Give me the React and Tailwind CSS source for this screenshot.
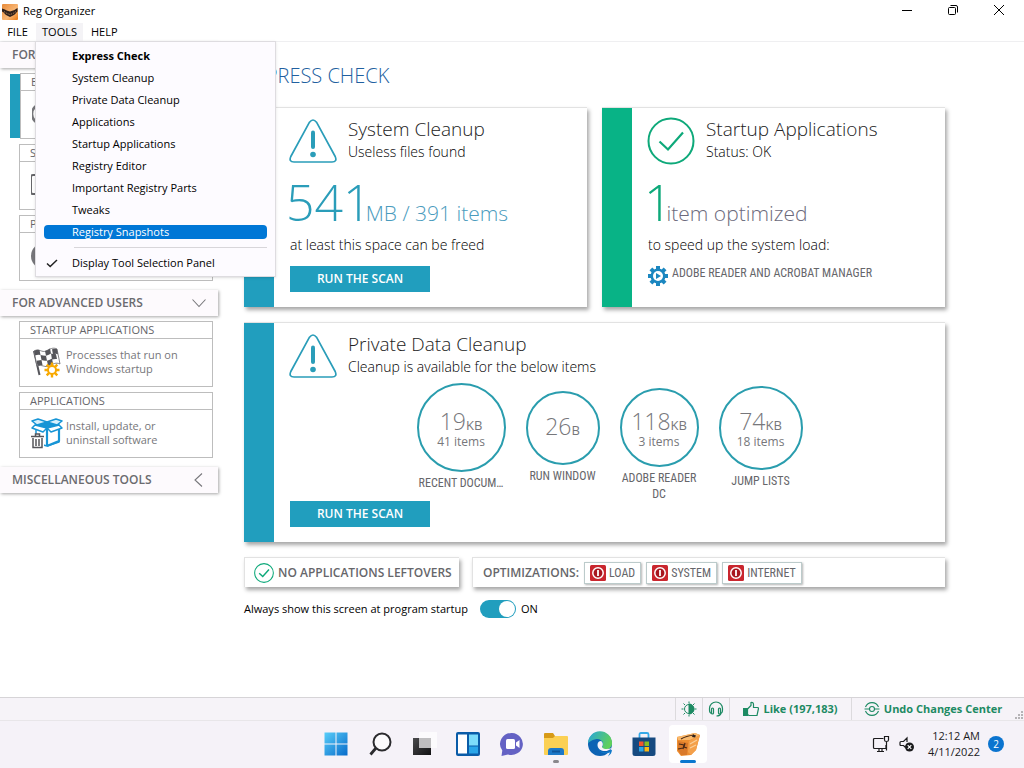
import React from "react";

const UI = "font-['Open_Sans','Noto_Sans',sans-serif]";
const NARROW = "font-['Roboto_Condensed','Liberation_Sans_Narrow','Open_Sans',sans-serif] font-normal";

const MENU_ITEMS = [
  "Express Check",
  "System Cleanup",
  "Private Data Cleanup",
  "Applications",
  "Startup Applications",
  "Registry Editor",
  "Important Registry Parts",
  "Tweaks",
  "Registry Snapshots",
];

function ToolsMenu() {
  return (
    <div className="absolute top-full left-0 z-20 flex w-[241px] flex-col border border-[#dedce0] bg-[#fdfbff] pt-[3px] pb-[2px] text-[11px] text-black shadow-sm">
      {MENU_ITEMS.map((item, i) => (
        <button
          key={item}
          className={`flex h-[22px] items-center px-2 text-left ${i === 0 ? "font-bold" : ""}`}
        >
          <span
            className={
              item === "Registry Snapshots"
                ? "flex h-[14px] w-full items-center rounded bg-[#0077d6] pl-7 text-white"
                : "pl-7"
            }
          >
            {item}
          </span>
        </button>
      ))}
      <div className="mt-1 mr-2 ml-[38px] border-t border-[#d8d6da]" />
      <button className="mt-1 flex h-[22px] items-center pl-[10px] text-left">
        <svg viewBox="0 0 12 12" className="mr-[14px] size-3" fill="none" stroke="#222" strokeWidth="1.5">
          <path d="M1 6.5 4.2 9.5 11 3" />
        </svg>
        Display Tool Selection Panel
      </button>
    </div>
  );
}

function AppLogo({ className }) {
  return (
    <svg viewBox="0 0 16 16" className={className}>
      <defs>
        <linearGradient id="logoFill" x1="0" y1="0" x2="1" y2="1">
          <stop offset="0" stopColor="#e88a38" />
          <stop offset=".6" stopColor="#f9b877" />
          <stop offset="1" stopColor="#e87a14" />
        </linearGradient>
      </defs>
      <rect width="16" height="16" rx="1" fill="url(#logoFill)" />
      <path d="M0 4.500c2 .2 4 2 5.500 2.200L8 7.500l3-1C13 6 14.500 4.500 15.500 4v3.500C14 8.500 13 11 11 11.500L8 13 5 11.500C3 11 2 8 0 7.500Z" fill="#2e211c" />
      <path d="M2 7.500l3 2 3 1 3-1 3-2" fill="none" stroke="#b98a63" strokeWidth=".8" strokeDasharray="1.500 1" />
    </svg>
  );
}

function CaptionBar() {
  return (
    <header className="bg-white">
      <div className="flex h-[23px] items-start justify-between pr-[2px] pl-[2px]">
        <div className="flex h-full items-center gap-[5px] text-black">
          <AppLogo className="size-4" />
          <h1 className="text-[11px]">Reg Organizer</h1>
        </div>
        <div className="flex text-black">
          <button aria-label="Minimize" className="flex h-5 w-[46px] items-center justify-center">
            <svg viewBox="0 0 12 12" className="size-3" stroke="currentColor"><path d="M1 6.500h10" /></svg>
          </button>
          <button aria-label="Restore" className="flex h-5 w-[45px] items-center justify-center">
            <svg viewBox="0 0 12 12" className="size-3" fill="none" stroke="currentColor">
              <rect x="1.500" y="3.500" width="7" height="7" rx="1" />
              <path d="M3.500 1.500H9a1.500 1.500 0 0 1 1.500 1.500v5.500" />
            </svg>
          </button>
          <button aria-label="Close" className="flex h-5 w-[47px] items-center justify-center">
            <svg viewBox="0 0 12 12" className="size-3" stroke="currentColor"><path d="M1 1l10 10M11 1L1 11" /></svg>
          </button>
        </div>
      </div>
      <nav className="flex h-[19px] items-stretch border-b border-[#efeff1] text-[11px] text-black">
        <button className="w-[35px] text-center">FILE</button>
        <div className="relative flex pl-px">
          <button className="w-[47px] bg-[#f4f3f6] text-center">TOOLS</button>
          <ToolsMenu />
        </div>
        <button className="px-2">HELP</button>
      </nav>
    </header>
  );
}

function SectionHeader({ children, open }) {
  return (
    <button className="flex h-[26px] w-full items-center justify-between bg-[#fdfafd] pr-[11px] pl-3 text-left text-xs font-semibold text-[#6b6b6f] shadow-[1px_1px_3px_rgba(0,0,0,0.35)]">
      {children}
      <svg viewBox="0 0 16 16" className="size-4" fill="none" stroke="#77777b" strokeWidth="1.100">
        <path d={open ? "M1.500 4.500 8 11.500l6.500-7" : "M11 1.500 4 8l7 6.500"} />
      </svg>
    </button>
  );
}

function ToolCard({ title, icon, lines, active }) {
  return (
    <div className={`mr-[5px] flex ${active ? "ml-[10px]" : "ml-[19px]"}`}>
      {active && <div className="my-px w-[10px] bg-[#219ebe]" />}
      <a href="#" className="block h-[66px] flex-1 border border-[#bdbdbd] bg-white text-[#66666a]">
        <span className="flex h-[17px] items-center border-b border-[#bdbdbd] pl-[10px] text-[11px]">{title}</span>
        <span className="flex h-[45px] items-center gap-[3px] pl-[11px]">
          {icon}
          <span className="text-[11px] leading-[14px] text-[#77777b]">
            {lines.map((l) => (
              <span key={l} className="block">{l}</span>
            ))}
          </span>
        </span>
      </a>
    </div>
  );
}

const GaugeIcon = (
  <svg viewBox="0 0 32 32" className="size-8" fill="none" stroke="#77777b">
    <circle cx="10" cy="16" r="10" strokeWidth="2.500" />
    <path d="M10 16l5-5" strokeWidth="2" />
  </svg>
);
const DiskIcon = (
  <svg viewBox="0 0 32 32" className="size-8" fill="none" stroke="#66666a" strokeWidth="2">
    <rect x="0" y="6" width="26" height="19" rx="2" />
    <path d="M6 29h16" />
  </svg>
);
const PrivacyIcon = (
  <svg viewBox="0 0 32 32" className="size-8">
    <circle cx="13" cy="16" r="13" fill="#77777b" />
    <path d="M8 13h10v8H8z" fill="#fff" />
  </svg>
);
const FlagIcon = (
  <svg viewBox="0 0 32 32" className="size-8">
    <path d="M3 5 8.500 29" stroke="#55555a" strokeWidth="2" />
    <path d="M3 5c5-3 8 2 12 0s7-4 11-2l3 15c-4-2-7 0-11 2s-7-2-12 0Z" fill="#fff" stroke="#66666a" strokeWidth=".8" />
    <g fill="#55555a">
      <path d="M3 5q3-1.700 5.500-1l1 5q-3-.6-5.500.600ZM14 5q3-.8 5-2.500l1 5q-2 1.400-5 2.200ZM25 2.700l1 .3 1 5.200q-2.500-1-5 .300l-1-5.200q2-.9 4-.6ZM9.500 9q3 .8 5.500.700l1 5q-3 .3-5.500-.6ZM20 7.500l2 .5q2-.7 3 .3l1 4.700q-2.500-.4-5 .6ZM5.500 14.700l5-.600 1 4.900q-3 0-5 1ZM16 14.700q3-.8 5-2.100l1 5q-2 1-5 2.200Z" />
    </g>
    <g transform="translate(21 24)">
      <g stroke="#f8a900" strokeWidth="2.400">
        <path d="M0-7.500v15M-7.500 0h15M-5.300-5.300 5.300 5.300M5.300-5.300-5.300 5.300" />
      </g>
      <circle r="4" fill="#fff" stroke="#f8a900" strokeWidth="2" />
    </g>
  </svg>
);
const BoxIcon = (
  <svg viewBox="0 0 32 32" className="size-8" fill="none">
    <g stroke="#1795d6" strokeWidth="1.500" strokeLinejoin="round">
      <path d="M5 9v17l11 3 12-4V9" fill="#fff" />
      <path d="M5 8l11 3 12-3-3-3-9 1-9-1Z" fill="#1795d6" />
      <path d="M4 8 1 11l11 4 4-4Z" fill="#fff" />
      <path d="M28 8l3 3-11 4-4-4Z" fill="#fff" />
      <path d="M7 2 1 4l5 4 10-3Z" fill="#d8f0fc" />
      <path d="M25 2l6 2-5 4-10-3Z" fill="#d8f0fc" />
      <path d="M16 12v17M28 12v12l-12 5" strokeWidth="2.200" />
    </g>
    <path d="M0 17h13v15H0z" fill="#fff" />
    <g stroke="#55555a" strokeWidth="1.500">
      <path d="M0 19.500h13M4.500 19v-2h4v2" />
      <path d="M2 21v9.500h9V21M5 22v7M8 22v7" />
    </g>
  </svg>
);

function Sidebar() {
  return (
    <aside className="flex w-[218px] shrink-0 flex-col">
      <SectionHeader open>FOR HOME USERS</SectionHeader>
      <div className="mt-[5px] mb-[9px] flex flex-col gap-[5px]">
        <ToolCard active title="EXPRESS CHECK" icon={GaugeIcon} lines={["Check the", "system state"]} />
        <ToolCard title="SYSTEM CLEANUP" icon={DiskIcon} lines={["Remove", "useless files"]} />
        <ToolCard title="PRIVATE DATA CLEANUP" icon={PrivacyIcon} lines={["Protect your", "privacy"]} />
      </div>
      <SectionHeader open>FOR ADVANCED USERS</SectionHeader>
      <div className="mt-[5px] mb-[9px] flex flex-col gap-[5px]">
        <ToolCard title="STARTUP APPLICATIONS" icon={FlagIcon} lines={["Processes that run on", "Windows startup"]} />
        <ToolCard title="APPLICATIONS" icon={BoxIcon} lines={["Install, update, or", "uninstall software"]} />
      </div>
      <SectionHeader>MISCELLANEOUS TOOLS</SectionHeader>
    </aside>
  );
}

const CARD = "border-t border-[#e2e2e2] bg-white shadow-[2px_3px_4px_rgba(0,0,0,0.35)]";

function WarningIcon() {
  return (
    <svg viewBox="0 0 48 44" className="h-11 w-12 shrink-0" fill="none" stroke="#2a9db9" strokeWidth="1.700">
      <path d="M20.500 3.200Q24-1.200 27.500 3.200L46.200 37.500Q48.500 43 43 43H5Q-.5 43 1.800 37.500Z" strokeLinejoin="round" />
      <path d="M24 13.500v14.500" strokeWidth="4" strokeLinecap="round" />
      <circle cx="24" cy="35.500" r="2.800" fill="#2a9db9" stroke="none" />
    </svg>
  );
}

function CheckCircle({ className, thin }) {
  return (
    <svg viewBox="0 0 48 48" className={className} fill="none" stroke="#0ea97a" strokeWidth={thin ? 2.5 : 2}>
      <circle cx="24" cy="24" r="22.500" />
      <path d="M12.500 24.500 21 32.500 36 15.500" strokeWidth={thin ? 3.500 : 2.200} />
    </svg>
  );
}

function CardHeading({ icon, title, sub }) {
  return (
    <div className="flex items-start gap-[11px]">
      <div className="flex h-12 w-12 items-center justify-center">{icon}</div>
      <div>
        <h3 className="text-[19px] leading-6 font-light text-[#222]">{title}</h3>
        <p className="text-sm leading-[22px] font-light text-black">{sub}</p>
      </div>
    </div>
  );
}

function ScanButton() {
  return (
    <button className="h-[26px] w-[140px] bg-[#219ebe] text-xs font-semibold text-white">RUN THE SCAN</button>
  );
}

function GearIcon() {
  return (
    <svg viewBox="0 0 20 20" className="mt-px size-5">
      <g fill="#1b87c0" transform="translate(10 10)">
        <circle r="7.500" />
        {[0, 45, 90, 135].map((a) => (
          <rect key={a} x="-2" y="-10" width="4" height="20" transform={`rotate(${a})`} />
        ))}
      </g>
      <circle cx="10" cy="10" r="5" fill="#fff" />
      <path d="M8 7v6l5-3Z" fill="#1b87c0" />
    </svg>
  );
}

const PRIVATE_ITEMS = [
  { n: "19", unit: "KB", items: "41 items", label: "RECENT DOCUM…", size: "size-[89px]", width: "w-[89px]" },
  { n: "26", unit: "B", label: "RUN WINDOW", size: "size-[74px]", width: "w-[74px]" },
  { n: "118", unit: "KB", items: "3 items", label: "ADOBE READER DC", size: "size-[79px]", width: "w-[79px]" },
  { n: "74", unit: "KB", items: "18 items", label: "JUMP LISTS", size: "size-[84px]", width: "w-[84px]" },
];

function OptButton({ children }) {
  return (
    <button className={`flex h-[22px] items-center gap-[3px] border border-[#bccbcb] bg-white px-[5px] text-xs text-[#66666a] shadow-[1px_1px_2px_rgba(0,0,0,0.3)] ${NARROW}`}>
      <svg viewBox="0 0 16 16" className="size-4">
        <rect width="16" height="16" rx="1.500" fill="#c9262e" />
        <circle cx="8" cy="8" r="5.200" fill="#a8161f" stroke="#fff" strokeWidth="1.500" />
        <path d="M8 5v6" stroke="#fff" strokeWidth="1.800" />
      </svg>
      {children}
    </button>
  );
}

function ExpressCheck() {
  return (
    <main className="flex min-w-0 flex-1 flex-col pr-[79px] pl-[26px]">
      <h2 className="flex h-[65px] items-center pt-[2px] text-xl font-light text-[#2160a0]">EXPRESS CHECK</h2>
      <div className="grid grid-cols-2 gap-[15px]">
        <section className={`flex h-[200px] ${CARD}`}>
          <div className="w-[30px] bg-[#219ebe]" />
          <div className="pt-[9px] pl-[15px]">
            <CardHeading icon={<WarningIcon />} title="System Cleanup" sub="Useless files found" />
            <p className="-ml-[3px] flex h-[70px] items-baseline font-light text-[#2a9db9]">
              <span className="text-[50px] leading-[74px]">541</span>
              <span className="-ml-[6px] text-[21px] text-[#4a9bbd]">MB / 391 items</span>
            </p>
            <p className="ml-px text-sm leading-5 font-light text-black">at least this space can be freed</p>
            <div className="mt-[10px] ml-px"><ScanButton /></div>
          </div>
        </section>
        <section className={`flex h-[200px] ${CARD}`}>
          <div className="w-[30px] bg-[#08b386]" />
          <div className="pt-[9px] pl-[15px]">
            <CardHeading icon={<CheckCircle className="size-12" />} title="Startup Applications" sub="Status: OK" />
            <p className="-ml-[3px] flex h-[70px] items-baseline font-light text-[#0ea97a]">
              <span className="text-[50px] leading-[74px]">1</span>
              <span className="-ml-[6px] text-[21px] text-[#6c6a7c]">item optimized</span>
            </p>
            <p className="ml-px text-sm leading-5 font-light text-black">to speed up the system load:</p>
            <div className={`mt-[10px] ml-px flex items-start gap-1 text-xs text-[#66666a] ${NARROW}`}>
              <GearIcon />
              ADOBE READER AND ACROBAT MANAGER
            </div>
          </div>
        </section>
        <section className={`col-span-2 flex h-[220px] ${CARD}`}>
          <div className="w-[30px] bg-[#219ebe]" />
          <div className="flex flex-1 flex-col pt-[9px]">
            <div className="pl-[15px]">
              <CardHeading icon={<WarningIcon />} title="Private Data Cleanup" sub="Cleanup is available for the below items" />
            </div>
            <div className="mt-[3px] flex items-center justify-center gap-5">
              {PRIVATE_ITEMS.map((p) => (
                <div key={p.n} className={`flex flex-col items-center gap-[3px] ${p.width}`}>
                  <div className={`flex flex-col items-center justify-center rounded-full border-2 border-[#2a9dae] text-[#77777b] ${p.size}`}>
                    <div className="flex items-baseline leading-6 font-light">
                      <span className="text-[23px]">{p.n}</span>
                      <span className="text-[13px] font-normal">{p.unit}</span>
                    </div>
                    {p.items && <div className="text-xs leading-[10px]">{p.items}</div>}
                  </div>
                  <div className={`h-8 w-full text-center text-xs leading-4 text-[#66666a] ${NARROW}`}>
                    {p.label}
                  </div>
                </div>
              ))}
            </div>
            <div className="-mt-[7px] ml-4"><ScanButton /></div>
          </div>
        </section>
      </div>
      <div className="mt-[15px] flex gap-[13px]">
        <section className={`flex h-[30px] w-[215px] items-center gap-1 border-l pl-[9px] text-xs font-semibold whitespace-nowrap text-[#66666a] ${CARD}`}>
          <CheckCircle className="size-5 shrink-0" thin />
          NO APPLICATIONS LEFTOVERS
        </section>
        <section className={`flex h-[30px] flex-1 items-center gap-[5px] border-l pl-[10px] text-xs font-semibold text-[#66666a] ${CARD}`}>
          OPTIMIZATIONS:
          <OptButton>LOAD</OptButton>
          <OptButton>SYSTEM</OptButton>
          <OptButton>INTERNET</OptButton>
        </section>
      </div>
      <label className="mt-[13px] flex items-center text-[11px] text-black">
        Always show this screen at program startup
        <input type="checkbox" role="switch" defaultChecked className="peer sr-only" />
        <span className="mr-[5px] ml-3 flex h-[18px] w-9 items-center justify-end rounded-full bg-[#219ebe] p-px">
          <span className="size-4 rounded-full bg-white" />
        </span>
        ON
      </label>
    </main>
  );
}

function StatusBar() {
  const cell = "flex h-full items-center justify-center border-l border-[#dcdadd]";
  return (
    <footer className="flex h-[23px] items-center justify-end border-t border-t-[#d6d4d7] bg-[#f6f3f8] text-[11px] font-bold text-[#1d8a63]">
      <button aria-label="Theme" className={`${cell} w-[27px]`}>
        <svg viewBox="0 0 16 16" className="size-4" fill="none" stroke="currentColor">
          <circle cx="8" cy="8" r="4.500" />
          <path d="M8 3a5 5 0 0 1 0 10Z" fill="currentColor" />
          <path d="M8 .5v2M8 13.500v2M.5 8h2M13.500 8h2M2.500 2.500l1.500 1.500M12 12l1.500 1.500M13.500 2.500 12 4M4 12l-1.500 1.500" />
        </svg>
      </button>
      <button aria-label="Support" className={`${cell} w-[27px]`}>
        <svg viewBox="0 0 16 16" className="size-4" fill="none" stroke="currentColor" strokeWidth="1.200">
          <path d="M3.500 12.500Q1.500 12 1.500 9V7.500a6.500 6.500 0 0 1 13 0V9q0 3-2 3.500M13 12.500q-1 2.500-4.500 2.500" />
          <rect x="3.500" y="7" width="2" height="6" rx="1" />
          <rect x="10.500" y="7" width="2" height="6" rx="1" />
        </svg>
      </button>
      <button className={`${cell} w-[122px] gap-1`}>
        <svg viewBox="0 0 16 16" className="size-4" fill="none" stroke="currentColor" strokeWidth="1.200">
          <path d="M.5 7.500h4v7h-4z" fill="currentColor" />
          <path d="M4.500 8 8 4.500V1.500q2.500-.5 2.500 2v3h4q1 0 1 1L14 14.500H6l-1.500-1" />
        </svg>
        Like (197,183)
      </button>
      <button className={`${cell} w-[163px] gap-1 whitespace-nowrap`}>
        <svg viewBox="0 0 16 16" className="size-4 shrink-0" fill="none" stroke="currentColor" strokeWidth="1.100">
          <path d="M1.500 6a7 7 0 0 1 13 0M1.500 10a7 7 0 0 0 13 0M.5 8h5M10.500 8h5" />
          <circle cx="8" cy="8" r="2.500" />
        </svg>
        Undo Changes Center
      </button>
      <svg viewBox="0 0 10 10" className="size-[10px] self-end" fill="#b5b3b6">
        <path d="M7 1h2v2H7zM4 4h2v2H4zM7 4h2v2H7zM1 7h2v2H1zM4 7h2v2H4zM7 7h2v2H7z" />
      </svg>
    </footer>
  );
}

const TASK_ICONS = [
  {
    name: "Start",
    art: (
      <>
        <defs>
          <linearGradient id="win" gradientUnits="userSpaceOnUse" x1="0" y1="0" x2="24" y2="24">
            <stop offset="0" stopColor="#5ad0fa" />
            <stop offset="1" stopColor="#0669c9" />
          </linearGradient>
        </defs>
        <path d="M.5.5h11v11H.5zM12.500.5h11v11h-11zM.5 12.500h11v11H.5zM12.500 12.500h11v11h-11z" fill="url(#win)" />
      </>
    ),
  },
  {
    name: "Search",
    art: (
      <g fill="none" stroke="#2b2b2e">
        <circle cx="14" cy="10" r="8.500" strokeWidth="2" fill="#fbfafc" />
        <path d="M8 16 2.500 22.500" strokeWidth="2.800" />
      </g>
    ),
  },
  {
    name: "Task View",
    art: (
      <>
        <defs>
          <linearGradient id="pane" x1="0" y1="0" x2="1" y2="1">
            <stop offset="0" stopColor="#4a4a4c" />
            <stop offset="1" stopColor="#111113" />
          </linearGradient>
        </defs>
        <path d="M7 0h18v16H7z" fill="#fcfbfd" />
        <path d="M1 6h18v17H1z" fill="url(#pane)" />
        <path d="M7 6h12v10H7z" fill="#bfbec0" />
      </>
    ),
  },
  {
    name: "Widgets",
    art: (
      <>
        <rect width="24" height="24" rx="2" fill="#0a5ca8" />
        <path d="M2 2.500h9v19H2z" fill="#fff" />
        <path d="M13 2.500h9v11h-9z" fill="#7ddcfa" />
        <path d="M13 14.500h9v7h-9z" fill="#29a5e8" />
      </>
    ),
  },
  {
    name: "Chat",
    art: (
      <>
        <path d="M12 1a11.500 11 0 1 1-4 21.500L1.500 24l.8-5.500A11.500 11 0 0 1 12 1Z" fill="#6462c4" />
        <rect x="6" y="7" width="9" height="10" rx="1.500" fill="#fff" />
        <path d="M16 10.500 19.500 8v8L16 13.500Z" fill="#fff" />
      </>
    ),
  },
  {
    name: "File Explorer",
    running: true,
    art: (
      <>
        <path d="M0 2q0-1 1-1h8l2 3v4H0z" fill="#d79a17" />
        <path d="M0 6h9l2-2h12q1 0 1 1v17q0 1-1 1H1q-1 0-1-1z" fill="#fbd054" />
        <path d="M4 23v-4q0-3 3-3h10q3 0 3 3v4z" fill="#1c78c8" />
        <path d="M8 19.500h8" stroke="#0f559b" strokeWidth="2" />
      </>
    ),
  },
  {
    name: "Edge",
    art: (
      <>
        <defs>
          <linearGradient id="edgeTop" x1="0" y1="0" x2="1" y2=".4">
            <stop offset="0" stopColor="#26a4dd" />
            <stop offset="1" stopColor="#5fd05c" />
          </linearGradient>
        </defs>
        <circle cx="12" cy="12" r="12" fill="#0c63b4" />
        <path d="M0 11.500A12 12 0 0 1 24 11c.3 4-3 6.500-6.500 6.500-2.500 0-4-1-3.500-2.500.8-1 1.200-2 1-3.500C14.500 8 11 6.500 7.500 7.200 3.500 8 .8 10 0 11.500Z" fill="url(#edgeTop)" />
        <path d="M14 15c1.500-2 1.500-5-1-6-2 0-4 1-4 3.500 0 4 2.500 7 6 7.500 3 .5 6-.5 8-2.500l1 1-1 3-3 3 2-4c-4 1.500-8.500 1-11-2-2.500-3-2.500-6-.5-9" fill="#0f78c9" />
        <path d="M14 15c1.500-2 1-5-1-6-2 0-3.500 1.500-3.500 4 0 3 2.500 5.500 6 6 3 .4 6-.5 8-3-3.500 1.500-8.500 1.500-9.500-1Z" fill="#f5f2f8" />
      </>
    ),
  },
  {
    name: "Store",
    art: (
      <>
        <path d="M7.500 6V2.500q0-1.500 1.500-1.500h6q1.500 0 1.500 1.500V6" fill="none" stroke="#35a9e8" strokeWidth="1.800" />
        <path d="M.5 5.500h23v16q0 2.500-2.500 2.500H3Q.5 24 .5 21.500Z" fill="#164a80" />
        <path d="M7 9.500h4.500V14H7z" fill="#f2552c" />
        <path d="M12.500 9.500H17V14h-4.500z" fill="#86bd22" />
        <path d="M7 15h4.500v4.500H7z" fill="#2ba6e6" />
        <path d="M12.500 15H17v4.500h-4.500z" fill="#fcb913" />
      </>
    ),
  },
  {
    name: "Reg Organizer",
    active: true,
    art: (
      <>
        <path d="M1 5 19 1l5 2-4 15-5 5-10 1-4-5Z" fill="#ee8f31" />
        <path d="M1 5 19 1l5 2-10 5L2 8Z" fill="#f9b96d" />
        <path d="M13 9l11-6-4 15-5 5-3-3Z" fill="#f4a04a" />
        <path d="M2 9l10 2-1 12-6 0-3-5Z" fill="#d9792a" />
        <path d="M5 7q5-3 13-4M3 12l5 1-1 4M2 17l5-1M9 11l-1 4 3 1" stroke="#4a2a16" strokeWidth="1.200" fill="none" />
        <path d="M17 2.500l3 1-1 2-3-.5Z" fill="#2e211c" />
        <path d="M14 12l7-4M14 16l6-3" stroke="#fbd09a" strokeWidth="1.200" />
      </>
    ),
  },
];

function Taskbar() {
  return (
    <footer className="grid h-12 grid-cols-[1fr_auto_1fr] items-center bg-[#f5f2f8] inset-shadow-[0_1px_0_#e8e6e9]">
      <div />
      <div className="flex h-full items-center">
        {TASK_ICONS.map((t) => (
          <button key={t.name} aria-label={t.name} className="flex h-full w-11 items-center justify-center">
            <span className={`relative flex size-[38px] items-center justify-center rounded ${t.active ? "bg-white" : ""}`}>
              <svg viewBox="0 0 24 24" className="size-6 overflow-visible">{t.art}</svg>
              {t.active && <span className="absolute bottom-0 h-[3px] w-4 rounded-full bg-[#0a77cf]" />}
              {t.running && <span className="absolute bottom-0 h-[3px] w-[6px] rounded-full bg-[#8a888c]" />}
            </span>
          </button>
        ))}
      </div>
      <div className="flex items-center justify-end pr-5 text-[#1b1b1d]">
        <svg viewBox="0 0 18 18" className="mr-2 size-[18px]" fill="none" stroke="currentColor" strokeWidth="1.200">
          <path d="M11.500 3.500H2.500q-1 0-1 1v8q0 1 1 1H14V10M5 16.500h7M7 13.500v3M10 13.500v3" />
          <path d="M12.500 1.500h4v3.500q0 1.500-2 1.500t-2-1.500zM14.500 6.500v9" />
        </svg>
        <svg viewBox="0 0 18 18" className="mr-3 size-[18px]" fill="none" stroke="currentColor" strokeWidth="1.200">
          <path d="M7.500 12.500 5.500 10.500H3q-1 0-1-1v-2q0-1 1-1h2.500L9 3v4" />
          <circle cx="11.500" cy="12" r="4.500" fill="currentColor" stroke="none" />
          <path d="M9.700 10.200l3.600 3.600M13.300 10.200l-3.600 3.600" stroke="#fff" />
        </svg>
        <time className="mr-2 text-right text-[11px] leading-4">
          12:12 AM<br />4/11/2022
        </time>
        <span className="flex size-4 items-center justify-center rounded-full bg-[#0b74cf] text-[10px] text-white">2</span>
      </div>
    </footer>
  );
}

export default function App() {
  return (
    <div className={`flex min-h-screen flex-col bg-white ${UI}`}>
      <CaptionBar />
      <div className="flex flex-1">
        <Sidebar />
        <ExpressCheck />
      </div>
      <StatusBar />
      <Taskbar />
    </div>
  );
}
